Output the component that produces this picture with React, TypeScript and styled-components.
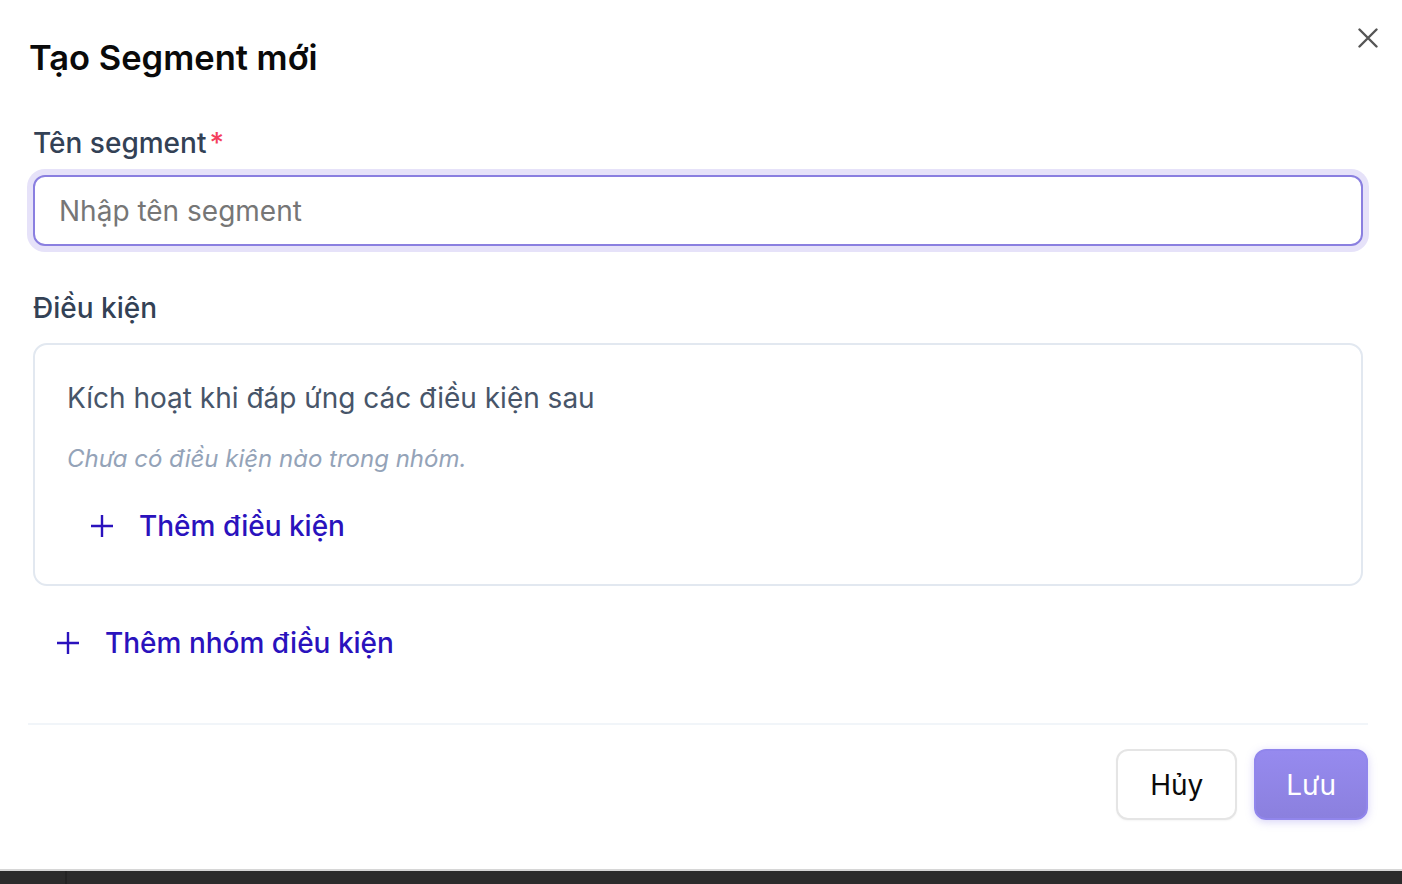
import React from "react";
import styled, { createGlobalStyle } from "styled-components";

const GlobalStyle = createGlobalStyle`
  html, body {
    margin: 0;
    padding: 0;
    background: #ffffff;
  }
  body {
    font-family: Inter, "Noto Sans", "Liberation Sans", sans-serif;
    -webkit-font-smoothing: antialiased;
  }
  * { box-sizing: border-box; }
`;

const Page = styled.div`
  height: 884px;
  display: flex;
  flex-direction: column;
  overflow: hidden;
`;

const Dialog = styled.div`
  position: relative;
  flex: 1;
  display: flex;
  flex-direction: column;
  padding: 38px 34px 0 28px;
  background: #ffffff;
  & > * { flex-shrink: 0; }
`;

const Title = styled.h2`
  margin: 0;
  font-size: 34.5px;
  line-height: 40px;
  font-weight: 600;
  letter-spacing: 0;
  color: #0a0a0a;
  padding-left: 1px;
`;

const CloseButton = styled.button`
  position: absolute;
  top: 24px;
  right: 20px;
  width: 28px;
  height: 28px;
  padding: 0;
  border: none;
  background: transparent;
  display: flex;
  align-items: center;
  justify-content: center;
  color: #555555;
  cursor: pointer;
`;

const Form = styled.div`
  display: flex;
  flex-direction: column;
  padding: 0 5px;
  margin-top: 47px;
  & > * { flex-shrink: 0; }
`;

const FieldLabel = styled.label`
  display: flex;
  gap: 3px;
  font-size: 28px;
  line-height: 36px;
  font-weight: 500;
  color: #334155;
`;

const Required = styled.span`
  color: #f43f5e;
`;

const TextInput = styled.input`
  margin-top: 14px;
  height: 71px;
  width: 100%;
  border: 2px solid #8a7fe0;
  border-radius: 12px;
  box-shadow: 0 0 0 6px #e6e2f9;
  padding: 0 24px;
  font-family: inherit;
  font-size: 28px;
  color: #1f2937;
  outline: none;
  caret-color: #000;
  &::placeholder {
    color: #767676;
  }
`;

const SectionLabel = styled(FieldLabel)`
  margin-top: 44px;
  font-weight: 500;
`;

const GroupCard = styled.div`
  margin-top: 17px;
  height: 243px;
  border: 2px solid #e2e8f0;
  border-radius: 14px;
  padding: 35px 32px 0;
  display: flex;
  flex-direction: column;
  align-items: flex-start;
`;

const GroupTitle = styled.div`
  font-size: 28px;
  line-height: 36px;
  color: #475569;
`;

const EmptyNote = styled.div`
  margin-top: 28px;
  font-size: 24px;
  line-height: 30px;
  font-style: italic;
  color: #94a3b8;
`;

const AddButton = styled.button<{ $offset?: number }>`
  display: inline-flex;
  align-items: center;
  align-self: flex-start;
  gap: 26px;
  margin-top: ${(p) => p.$offset ?? 0}px;
  padding: 0 24px;
  height: 48px;
  border: none;
  background: transparent;
  font-family: inherit;
  font-size: 28px;
  font-weight: 500;
  color: #2a12bd;
  cursor: pointer;
`;

const Footer = styled.div`
  margin-top: auto;
  border-top: 2px solid #f1f5f9;
  padding: 24px 0 49px;
  display: flex;
  justify-content: flex-end;
  gap: 17px;
`;

const ActionButton = styled.button<{ $primary?: boolean }>`
  height: 71px;
  padding: 0 ${(p) => (p.$primary ? 30 : 32)}px;
  border-radius: 12px;
  font-family: inherit;
  font-size: 28px;
  font-weight: 400;
  cursor: pointer;
  border: 2px solid ${(p) => (p.$primary ? "#9186ec" : "#e5e5e5")};
  color: ${(p) => (p.$primary ? "#ffffff" : "#0a0a0a")};
  background: ${(p) =>
    p.$primary ? "linear-gradient(180deg, #968aef 0%, #8b80de 100%)" : "#ffffff"};
  box-shadow: ${(p) =>
    p.$primary ? "0 2px 8px rgba(139, 128, 232, 0.35)" : "0 1px 2px rgba(0,0,0,0.04)"};
`;

const BottomBar = styled.div`
  height: 15px;
  flex-shrink: 0;
  display: flex;
  border-top: 2px solid #d6d6d6;
  background: #2b2b2b;
`;

const BarCell = styled.div<{ $width?: number }>`
  width: ${(p) => (p.$width ? `${p.$width}px` : "auto")};
  flex: ${(p) => (p.$width ? "none" : 1)};
  border-right: ${(p) => (p.$width ? "2px solid #232323" : "none")};
`;

const PlusIcon = ({ size = 22 }: { size?: number }) => (
  <svg width={size} height={size} viewBox="0 0 22 22" fill="none">
    <path d="M0 11h22M11 0v22" stroke="currentColor" strokeWidth="2.4" />
  </svg>
);

const CloseIcon = () => (
  <svg width="20" height="20" viewBox="0 0 20 20" fill="none">
    <path
      d="M1.5 1.5l17 17M18.5 1.5l-17 17"
      stroke="currentColor"
      strokeWidth="2.4"
      strokeLinecap="round"
    />
  </svg>
);

export default function App() {
  return (
    <Page>
      <GlobalStyle />
      <Dialog>
        <Title>Tạo Segment mới</Title>
        <CloseButton aria-label="Đóng">
          <CloseIcon />
        </CloseButton>
        <Form>
          <FieldLabel htmlFor="segment-name">
            Tên segment<Required>*</Required>
          </FieldLabel>
          <TextInput id="segment-name" placeholder="Nhập tên segment" autoFocus />
          <SectionLabel as="div">Điều kiện</SectionLabel>
          <GroupCard>
            <GroupTitle>Kích hoạt khi đáp ứng các điều kiện sau</GroupTitle>
            <EmptyNote>Chưa có điều kiện nào trong nhóm.</EmptyNote>
            <AddButton $offset={28}>
              <PlusIcon />
              Thêm điều kiện
            </AddButton>
          </GroupCard>
          <AddButton $offset={33}>
            <PlusIcon />
            Thêm nhóm điều kiện
          </AddButton>
        </Form>
        <Footer>
          <ActionButton>Hủy</ActionButton>
          <ActionButton $primary>Lưu</ActionButton>
        </Footer>
      </Dialog>
      <BottomBar>
        <BarCell $width={67} />
        <BarCell />
      </BottomBar>
    </Page>
  );
}
